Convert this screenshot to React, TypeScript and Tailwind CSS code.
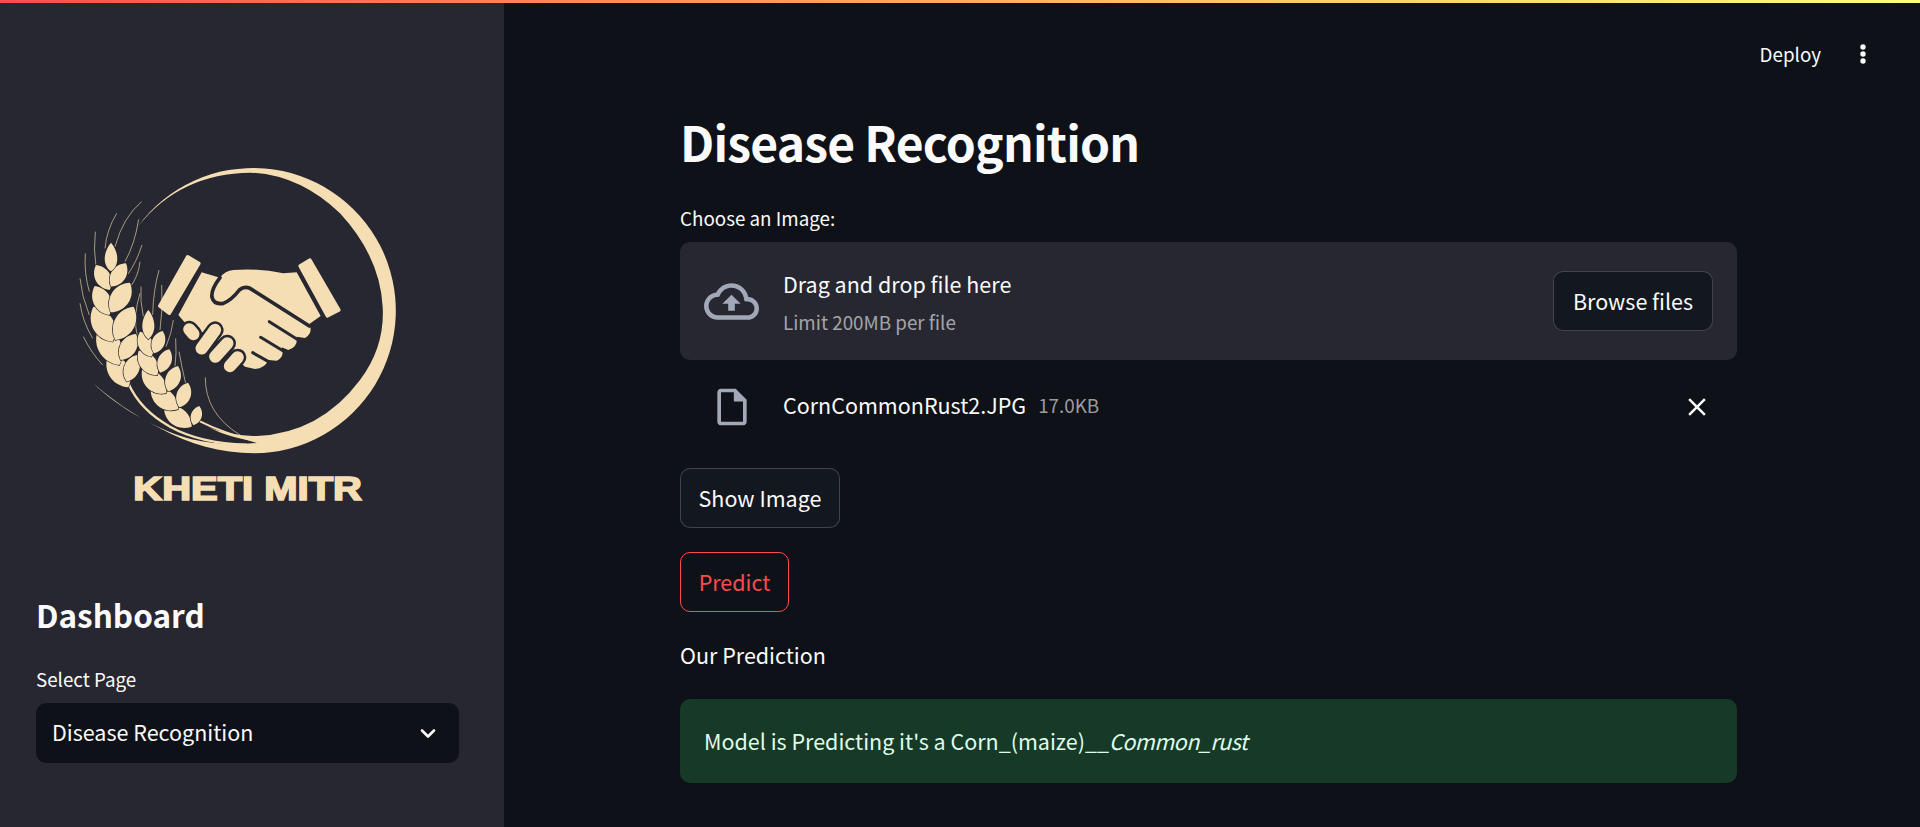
import React from 'react';

const WHEAT = '#f5deb3';
const SIDE = '#262730';

// [base x, base y, tip x, tip y] in logo units
const grains: number[][] = [
  [205, 712, 146, 612], [200, 695, 230, 615],
  [178, 645, 118, 530], [182, 630, 228, 552],
  [158, 575, 100, 470], [166, 570, 221, 470],
  [148, 495, 104, 408], [152, 487, 210, 398],
  [149, 420, 108, 345], [153, 410, 198, 340],
  [395, 830, 312, 772], [400, 826, 418, 768],
  [354, 778, 272, 716], [358, 772, 384, 698],
  [318, 730, 246, 660], [324, 724, 354, 648],
  [292, 675, 236, 602], [300, 668, 328, 598],
  [274, 620, 240, 545], [282, 610, 308, 543],
];

const awns: string[] = [
  'M135 295Q140 240 170 190', 'M165 290Q190 200 245 155', 'M195 335Q225 280 236 208',
  'M204 372Q230 335 246 285', 'M210 412Q235 380 240 335', 'M108 350Q100 300 106 245',
  'M88 425Q72 370 76 310', 'M88 495Q65 440 60 385', 'M98 565Q68 515 60 460',
  'M128 645Q95 610 70 560', 'M250 500Q240 455 243 410', 'M278 495Q280 420 297 360',
  'M300 540Q310 470 305 405', 'M232 560Q218 500 240 430', 'M318 590Q335 550 340 510',
  'M345 650Q350 610 347 565', 'M378 705Q365 650 357 605', 'M436 682Q435 790 540 855',
];

const fingers: number[][] = [
  [118, 268, 130, 282],
  [195, 270, 155, 325],
  [232, 310, 196, 350],
  [263, 352, 240, 378],
];

function grainPath([bx, by, tx, ty]: number[]) {
  const dx = tx - bx;
  const dy = ty - by;
  const nx = -dy * 0.36;
  const ny = dx * 0.36;
  return `M${bx} ${by}C${bx + dx * 0.25 + nx} ${by + dy * 0.25 + ny} ${bx + dx * 0.75 + nx} ${by + dy * 0.75 + ny} ${tx} ${ty}C${bx + dx * 0.75 - nx} ${by + dy * 0.75 - ny} ${bx + dx * 0.25 - nx} ${by + dy * 0.25 - ny} ${bx} ${by}Z`;
}

function Logo() {
  return (
    <svg viewBox="0 0 1080 1110" className="ml-[24px] block h-[370px] w-[360px] shrink-0">
      {/* ring with tail */}
      <path
        fill={WHEAT}
        d="M235 228A428 428 0 1 1 583 910C480 908 390 885 300 835C220 795 150 745 100 700C170 770 300 845 395 868C460 884 530 884 600 878C560 868 500 862 440 828C470 845 540 858 590 858Q780 850 900 690Q975 590 968 470Q960 320 840 190Q720 75 573 68Q360 70 235 228Z"
      />
      <path d="M205 700Q240 780 330 830Q420 880 560 884" fill="none" stroke={WHEAT} strokeWidth="7" />
      <path d="M415 812Q490 850 600 878" fill="none" stroke={WHEAT} strokeWidth="6" />

      {awns.map((d, i) => (
        <path key={i} d={d} fill="none" stroke={WHEAT} strokeWidth="2.5" strokeOpacity="0.75" />
      ))}

      {grains.map((g, i) => (
        <path key={i} d={grainPath(g)} fill={WHEAT} stroke={SIDE} strokeWidth="4" paintOrder="stroke" />
      ))}
      <path d="M153 278C130 305 126 345 153 364C180 345 176 305 153 278Z" fill={WHEAT} stroke={SIDE} strokeWidth="4" paintOrder="stroke" />
      <path d="M265 480C244 505 238 545 265 568C292 545 286 505 265 480Z" fill={WHEAT} stroke={SIDE} strokeWidth="4" paintOrder="stroke" />

      {/* handshake */}
      <g transform="translate(270 270)">
        <path
          fill={WHEAT}
          d="M155 97L210 113Q225 92 250 90Q330 84 400 100L440 97L512 228L478 252Q490 280 465 294L440 290Q445 322 415 330L395 322Q405 352 380 362L355 360Q345 385 315 387L285 380L200 300L105 248L85 225Z"
        />
        <path
          fill="none"
          stroke={SIDE}
          strokeWidth="11"
          strokeLinecap="round"
          strokeLinejoin="round"
          d="M210 113Q182 150 186 172Q192 195 220 190Q245 180 268 150Q282 138 300 145L478 258"
        />
        <path fill="none" stroke={SIDE} strokeWidth="9" strokeLinecap="round" d="M358 245L445 300M332 292L405 336M308 338L365 370" />
        {fingers.map(([x1, y1, x2, y2], i) => (
          <line key={i} x1={x1} y1={y1} x2={x2} y2={y2} stroke={SIDE} strokeWidth="52" strokeLinecap="round" />
        ))}
        {fingers.map(([x1, y1, x2, y2], i) => (
          <line key={i} x1={x1} y1={y1} x2={x2} y2={y2} stroke={WHEAT} strokeWidth="37" strokeLinecap="round" />
        ))}
        <path fill={WHEAT} stroke={WHEAT} strokeWidth="10" strokeLinejoin="round" d="M113 50L147 70L58 220L29 198Z" />
        <path fill={WHEAT} stroke={WHEAT} strokeWidth="10" strokeLinejoin="round" d="M480 60L567 210L532 228L450 78Z" />
      </g>

      <text
        x="220"
        y="1050"
        textLength="686"
        lengthAdjust="spacingAndGlyphs"
        fill={WHEAT}
        stroke={WHEAT}
        strokeWidth="5"
        fontSize="99"
        fontWeight="700"
        fontFamily="'Liberation Sans', Arial, sans-serif"
      >
        KHETI MITR
      </text>
    </svg>
  );
}

function Sidebar() {
  return (
    <aside className="flex h-full w-[504px] shrink-0 flex-col bg-[#262730] pl-[36px] pt-[147px]">
      <Logo />
      <h2 className="mt-[74px] h-[40px] text-[31.5px] font-semibold leading-[40px] text-[#fafafa]">Dashboard</h2>
      <div className="mt-[33px] h-[24px] text-[18.8px] leading-[24px] text-[#fafafa]">Select Page</div>
      <div className="mt-[12px] flex h-[60px] w-[423px] items-center justify-between rounded-[10px] bg-[#0e1117] pb-[1px] pl-[16px] pr-[19px] text-[21.5px] text-[#fafafa]">
        <span>Disease Recognition</span>
        <svg viewBox="0 0 24 24" className="h-[24px] w-[24px]" fill="none" stroke="#fafafa" strokeWidth="2.6" strokeLinecap="round" strokeLinejoin="round">
          <path d="M6 9.5l6 6 6-6" />
        </svg>
      </div>
    </aside>
  );
}

function Main() {
  return (
    <main className="flex h-full min-w-0 flex-1 flex-col bg-[#0e1117]">
      <header className="flex h-[102px] shrink-0 items-start justify-end pr-[54px] pt-[39px]">
        <span className="text-[18.8px] leading-[24px] text-[#fafafa]">Deploy</span>
        <svg viewBox="0 0 6 20" className="ml-[39px] mt-[2px] h-[20px] w-[6px]" fill="#fafafa">
          <circle cx="3" cy="3" r="2.7" />
          <circle cx="3" cy="10" r="2.7" />
          <circle cx="3" cy="17" r="2.7" />
        </svg>
      </header>

      <div className="ml-[176px] flex w-[1057px] flex-col">
        <h1 className="mt-[6px] h-[60px] text-[48px] font-bold leading-[60px] tracking-[-0.8px] text-[#fafafa]">Disease Recognition</h1>
        <label className="mt-[35px] h-[24px] text-[18.8px] leading-[24px] text-[#fafafa]">Choose an Image:</label>

        <section className="mt-[12px] flex h-[118px] items-center rounded-[10px] bg-[#262730] pl-[24px] pr-[24px]">
          <svg viewBox="0 0 24 24" className="h-[55px] w-[55px] shrink-0" fill="#a3a8b8">
            <path d="M19.35 10.04C18.67 6.59 15.64 4 12 4 9.11 4 6.6 5.64 5.35 8.04 2.34 8.36 0 10.91 0 14c0 3.31 2.69 6 6 6h13c2.76 0 5-2.24 5-5 0-2.64-2.05-4.78-4.65-4.96zM19 18H6c-2.21 0-4-1.79-4-4 0-2.05 1.53-3.76 3.56-3.97l1.07-.11.5-.95C8.08 7.14 9.94 6 12 6c2.62 0 4.88 1.86 5.39 4.43l.3 1.5 1.53.11c1.56.1 2.78 1.41 2.78 2.96 0 1.65-1.35 3-3 3zM8 13h2.55v3h2.9v-3H16l-4-4z" />
          </svg>
          <div className="ml-[24px] mt-[2px] flex flex-col">
            <span className="text-[21.5px] leading-[28px] text-[#fafafa]">Drag and drop file here</span>
            <span className="mt-[12px] text-[18.8px] leading-[24px] text-[#fafafa]/60">Limit 200MB per file</span>
          </div>
          <button className="ml-auto h-[60px] w-[160px] rounded-[10px] border border-[#fafafa]/20 bg-[#13171f] text-[21.5px] text-[#fafafa]">Browse files</button>
        </section>

        <div className="mt-[20px] flex h-[50px] items-center pl-[30px] pr-[25px]">
          <svg viewBox="0 0 24 24" className="mt-[4px] h-[44px] w-[44px] shrink-0" fill="#a3a8b8">
            <path d="M14 2H6c-1.1 0-1.99.9-1.99 2L4 20c0 1.1.89 2 1.99 2H18c1.1 0 2-.9 2-2V8l-6-6zM6 20V4h7v5h5v11H6z" />
          </svg>
          <span className="ml-[29px] text-[21.5px] text-[#fafafa]">CornCommonRust2.JPG</span>
          <span className="ml-[12px] text-[18.8px] text-[#fafafa]/60">17.0KB</span>
          <svg viewBox="0 0 24 24" className="ml-auto mt-[4px] h-[30px] w-[30px] shrink-0" fill="#fafafa">
            <path d="M19 6.41L17.59 5 12 10.59 6.41 5 5 6.41 10.59 12 5 17.59 6.41 19 12 13.41 17.59 19 19 17.59 13.41 12z" />
          </svg>
        </div>

        <button className="mt-[38px] h-[60px] w-[160px] self-start rounded-[10px] border border-[#fafafa]/20 bg-[#13171f] text-[21.5px] text-[#fafafa]">Show Image</button>
        <button className="mt-[24px] h-[60px] w-[109px] self-start rounded-[10px] border border-[#ff4b4b] bg-[#0e1117] text-[21.5px] text-[#ff4b4b]">Predict</button>
        <p className="mt-[29px] h-[28px] text-[21.5px] leading-[28px] text-[#fafafa]">Our Prediction</p>
        <div className="mt-[30px] flex h-[84px] items-center rounded-[10px] bg-[#173928] pl-[24px] text-[21.5px] text-[#dffde9]">
          <span>Model is Predicting it's a Corn_(maize)__<em className="tracking-[-0.5px]">Common_rust</em></span>
        </div>
      </div>
    </main>
  );
}

export default function App() {
  return (
    <div className="flex h-[827px] w-full flex-col overflow-hidden bg-[#0e1117] font-['Noto_Sans_CJK_SC','Source_Sans_Pro',sans-serif]">
      <div className="h-[3px] w-full shrink-0 bg-gradient-to-r from-[#ff4b4b] to-[#fffd80]" />
      <div className="flex min-h-0 flex-1">
        <Sidebar />
        <Main />
      </div>
    </div>
  );
}
